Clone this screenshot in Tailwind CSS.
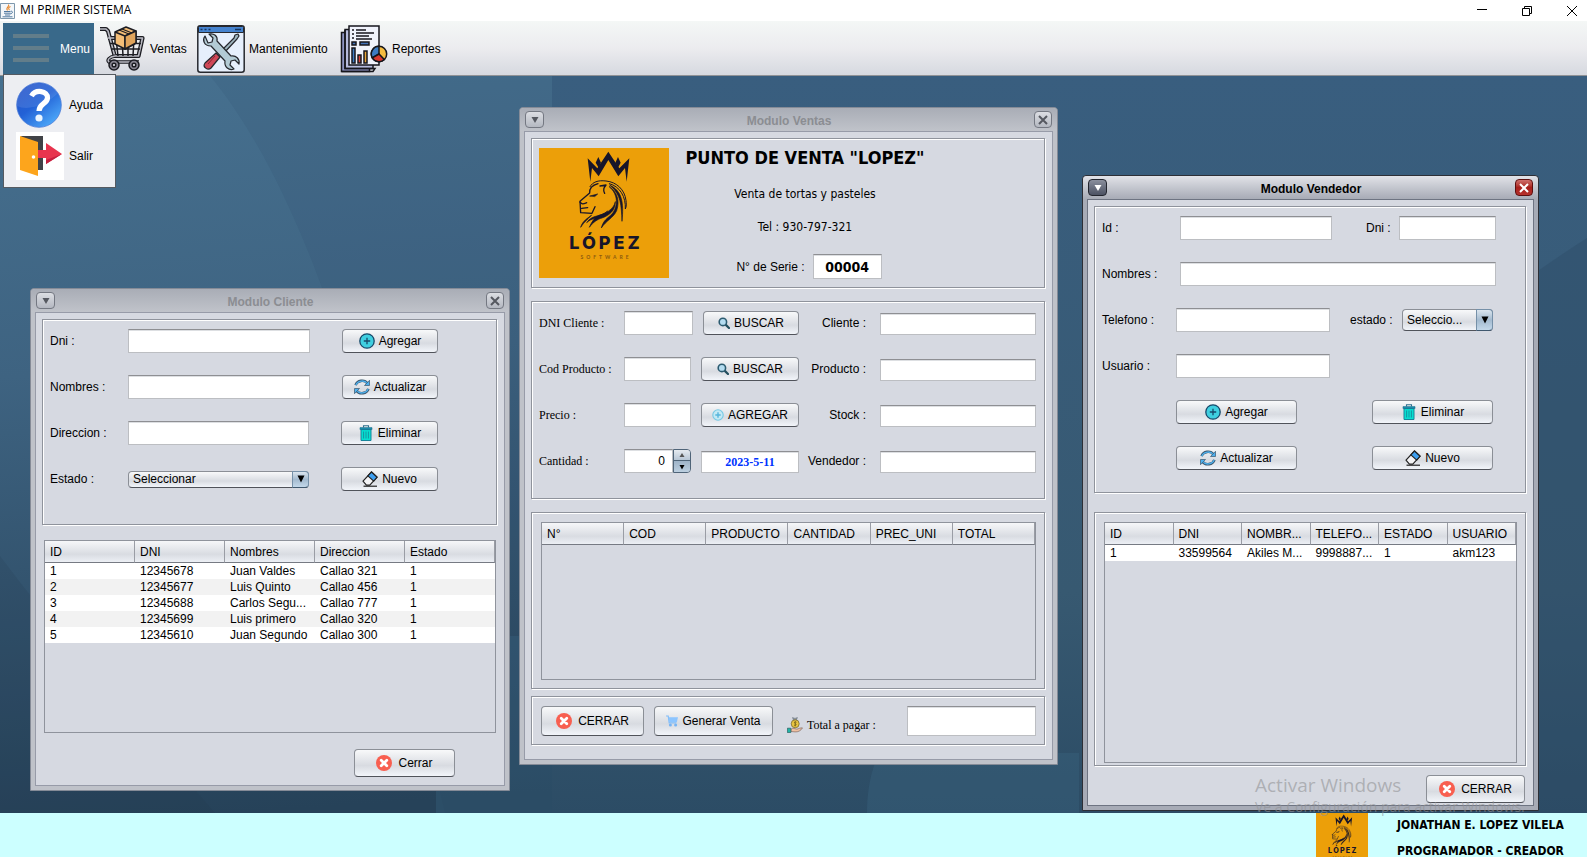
<!DOCTYPE html>
<html lang="es">
<head>
<meta charset="utf-8">
<title>MI PRIMER SISTEMA</title>
<script src="https://cdn.jsdelivr.net/npm/@tailwindcss/browser@4"></script>
</head>
<body class="flex min-h-screen flex-col overflow-hidden bg-white font-['Liberation_Sans',Arial,sans-serif] text-xs text-black">

<svg class="hidden" aria-hidden="true">
  <symbol id="i-plus" viewBox="0 0 16 16"><circle cx="8" cy="8" r="7.2" fill="#3fcfe0" stroke="#174a6b" stroke-width="1.3"/><path d="M8 4.8v6.4M4.8 8h6.4" stroke="#174a6b" stroke-width="1.3"/></symbol>
  <symbol id="i-sync" viewBox="0 0 16 16"><g fill="none"><path d="M1.6 6.2C3.2 1.2 10.5.2 13.6 4.6M14.4 9.8C12.8 14.8 5.5 15.8 2.4 11.4" stroke="#3c566b" stroke-width="2.6"/><path d="M1.8 6.2C3.4 1.5 10.5.5 13.4 4.6M14.2 9.8C12.6 14.5 5.5 15.5 2.6 11.4" stroke="#4db0ee" stroke-width="1.3"/></g><path d="M15.5 1.3v5.2h-5zM.5 14.7V9.5h5z" fill="#4db0ee" stroke="#3c566b" stroke-width=".7"/></symbol>
  <symbol id="i-trash" viewBox="0 0 16 16"><path d="M5.5 2.5V.8h5v1.7" fill="none" stroke="#2c6f8d" stroke-width="1.1"/><path d="M3 4.5h10v11H3z" fill="#06dfd0" stroke="#16859b"/><path d="M2 2.6h12v2H2z" fill="#1a8dab" stroke="#1a6c8b" stroke-width=".6"/><path d="M5.6 6.5v7M8 6.5v7M10.4 6.5v7" stroke="#1496a3"/></symbol>
  <symbol id="i-erase" viewBox="0 0 16 16"><path d="M1 10.2 9.5 1l5.6 5.2-7.3 7.9H4.4z" fill="#f4f4f6" stroke="#222" stroke-width="1.2" stroke-linejoin="round"/><path d="m5.9 4.9 5.8 5.2 3.4-3.9L9.5 1z" fill="#3d9ff0" stroke="#222" stroke-width="1.2" stroke-linejoin="round"/><path d="M1.5 15.2h13.5" stroke="#222" stroke-width="1.2"/></symbol>
  <symbol id="i-close" viewBox="0 0 16 16"><circle cx="8" cy="8" r="8" fill="#f85f50"/><path d="m5.2 5.2 5.6 5.6m0-5.6-5.6 5.6" stroke="#fff" stroke-width="2.8" stroke-linecap="round"/></symbol>
  <symbol id="i-search" viewBox="0 0 12 12"><path d="m7.6 7.6 3.4 3.4" stroke="#234e5e" stroke-width="2.2" stroke-linecap="round"/><circle cx="4.9" cy="4.9" r="3.7" fill="#b4dcf0" stroke="#2c5b70" stroke-width="1.6"/></symbol>
  <symbol id="i-plus2" viewBox="0 0 12 12"><circle cx="6" cy="6" r="5.2" fill="#c4e9f4" stroke="#76c9e4" stroke-width="1.1"/><path d="M6 3.3v5.4M3.3 6h5.4" stroke="#55b5dc" stroke-width="1.4"/></symbol>
  <symbol id="i-cart" viewBox="0 0 12 12"><path d="M0 1h2.2l1 6.8h7.2" fill="none" stroke="#82bdf8" stroke-width="1.2"/><path d="M2.5 2.2H12l-1.2 5H3.2z" fill="#8cc5ff"/><circle cx="4.4" cy="10" r="1.5" fill="#76b4f4"/><circle cx="9.6" cy="10" r="1.5" fill="#76b4f4"/></symbol>
  <symbol id="i-money" viewBox="0 0 16 16"><path d="m6.5 3-1-2.4L8 1.4l2.4-.8L9.4 3z" fill="#9aa3ad" stroke="#555f6b" stroke-width=".5"/><circle cx="8.2" cy="6.8" r="4" fill="#e8c53e" stroke="#7a6a35" stroke-width=".8"/><path d="M9.5 5.3c-1.4-1-3 .3-1.3 1.3 2 .8.6 2.4-1.2 1.5M8.2 4.2v5.2" fill="none" stroke="#635218" stroke-width=".7"/><path d="M4 12.2c2-1.6 3.5-.4 6 0 1.6-.5 3.3-1.6 5.5-1.3-1.8 3-4.5 4.2-7.5 4L4 14.5z" fill="#efc1a3" stroke="#6f5a55" stroke-width=".6"/><path d="M.4 11.2h3.4v4.4H.4z" fill="#21b5a8" stroke="#2b5f60" stroke-width=".7"/></symbol>
  <symbol id="logo" viewBox="0 0 130 130">
    <path d="M0 0h130v130H0z" fill="#ec9f09"/>
    <g transform="scale(.3333) translate(-27 -24)" fill="none" stroke="#17152a" stroke-linejoin="round" stroke-linecap="round">
      <path d="m173 55 29 30 33-50 33 50 30-30-8 70-5-41-20 25-30-49-29 49-20-25-5 41z" fill="#17152a" stroke="none"/>
      <path d="m205 51 8 17-7 15-9-15zM264 51l8 17-8 15-8-15z" fill="#17152a" stroke="none"/>
      <path d="M180 140c8-14 24-20 48-17 32 3 56 26 60 58 1 10 2 18-2 26 2-36-16-68-48-76" stroke-width="3"/>
      <path d="M240 136c36 16 42 52 36 108-2-50-4-80-32-104z" fill="#17152a" stroke-width="2"/>
      <path d="M238 140c28 24 26 60 8 82-12 12-26 18-32 42 16-24 36-30 46-52 10-30 2-56-22-72z" fill="#17152a" stroke-width="2"/>
      <path d="M256 186c-6 24-30 34-48 40-14 6-22 18-30 36 12-16 24-24 38-28 22-8 40-22 40-48z" fill="#17152a" stroke-width="2"/>
      <path d="M232 214c-20 18-44 8-62 34 14-14 32-12 46-20zM184 226c-12 10-26 16-32 36 10-16 20-22 32-36z" fill="#17152a" stroke-width="2"/>
      <path d="M204 131c-18 5-26 16-25 28l-29 25 2 34 34 2 9-20" stroke-width="4"/>
      <path d="M150 186c6 8 10 6 20 2M155 205l18-2M210 138l18-3c-6 8-10 14-4 25" stroke-width="4"/>
      <path d="m180 168 23-6-8 7z" fill="#17152a" stroke-width="2"/>
    </g>
    <text x="67" y="101" text-anchor="middle" fill="#17152a" class="font-['Inter','Open_Sans',sans-serif] text-[18px] font-extrabold tracking-[3px]">LÓPEZ</text>
    <text x="67" y="111" text-anchor="middle" fill="#8b5a10" class="font-['Lato','Open_Sans',sans-serif] text-[5px] font-bold tracking-[3px]">SOFTWARE</text>
  </symbol>
</svg>

<!-- Application title bar -->
<header class="flex h-[21px] items-center bg-white">
  <svg class="h-4 w-4" viewBox="0 0 16 16"><path d="M.5.5h14v15H.5z" fill="#f4f7fa" stroke="#7e98ad"/><path d="M8.5 1.5c1.5 2-3.5 3-1 6M10.5 3.5c-2 .8-2.5 2-1 3.5" fill="none" stroke="#e8872c" stroke-width="1.1"/><path d="M4 8.5h6.5M4 10.2h6.5M5 12h5M2.5 13.8h10" stroke="#5079a0"/><path d="M10.8 8.2c2.5-.3 2 2.4-.6 2.8" fill="none" stroke="#5079a0"/></svg>
  <h1 class="ml-1 pb-0.5 font-['Open_Sans',sans-serif] text-xs leading-4">MI PRIMER SISTEMA</h1>
  <div class="ml-auto flex gap-[33px] pr-[9px]">
    <button aria-label="Minimizar"><svg class="h-3 w-3" viewBox="0 0 12 12"><path d="M1 4.5h10" stroke="#000"/></svg></button>
    <button aria-label="Restaurar"><svg class="h-3 w-3" viewBox="0 0 12 12" fill="none" stroke="#000"><path d="M1.500 3.500h7v7h-7zM3.500 3.500v-2h7v7h-2"/></svg></button>
    <button aria-label="Cerrar aplicación"><svg class="h-3 w-3" viewBox="0 0 12 12"><path d="m1 1 10 10M11 1 1 11" stroke="#000"/></svg></button>
  </div>
</header>

<!-- Menu bar -->
<nav class="relative z-10 flex h-[55px] border-b border-[#909296] bg-linear-to-b from-[#f4f7f6] via-[#ececef] to-[#d6d9e0] pt-0.5 pl-[3px]">
  <button class="flex w-[91px] items-center gap-1 bg-[#39698a] pl-[5px] text-white">
    <svg class="h-12 w-12" viewBox="0 0 48 48"><path d="M5 11h36M5 23h36M5 35h36" stroke="#627d8a" stroke-width="4"/></svg>Menu</button>
  <button class="flex w-[98px] items-center gap-1 pl-1">
    <svg class="h-12 w-12" viewBox="0 0 48 48" fill="none" stroke="#1c1c22" stroke-width="1.500" stroke-linejoin="round">
      <path d="M2 4h6l2 2 7 26M10 13h34.500l-4 18H16" stroke-width="4.200"/>
      <path d="M2 4h6l2 2 7 26M10 13h34.500l-4 18H16" stroke="#b9b9c2" stroke-width="1.600"/>
      <path d="M12 18.500h31M14 24h28M18 13l2 18M24 13l1 18M30 13v18M36 13l-1 18"/>
      <path d="M17 31c-6 1-8 4-6 6h30" stroke-width="3.600"/><path d="M17 31c-6 1-8 4-6 6h30" stroke="#b9b9c2"/>
      <circle cx="16" cy="40" r="5" fill="#86838f"/><circle cx="36" cy="40" r="5" fill="#86838f"/><circle cx="16" cy="40" r="1.800" fill="#e8e8ee"/><circle cx="36" cy="40" r="1.800" fill="#e8e8ee"/>
      <path d="m17 7 11-5 10 4v12l-11 6-10-5z" fill="#f3bd77"/><path d="m17 7 10 4 11-5M27 11v13" /><path d="m21 5 10 4v5M24 4l10 4" stroke-width="1.200"/><path d="m27 11 11-5v12l-11 6z" fill="#e0a45c"/>
    </svg>Ventas</button>
  <button class="flex w-[143px] items-center gap-1 pl-[5px]">
    <svg class="h-12 w-12" viewBox="0 0 48 48" stroke="#26282e" stroke-linejoin="round">
      <rect x=".8" y=".8" width="46.400" height="46.400" rx="2.500" fill="#e6effc" stroke-width="1.500"/><path d="M1.500 7.500v-5l1-1h43l1 1v5z" fill="#4583cf"/><path d="M3.500 4.500h2M7.500 4.500h2M11.500 4.500h2M38 4.500h6" stroke="#17355e" stroke-width="1.600"/>
      <path d="m24 26 13-13 1-3 3-1 1 2-2 3-13 14z" fill="#9fb6c0" stroke-width="1.200"/>
      <path d="m19 28 4 4-9 11c-3 3-9-1-6-5z" fill="#cf4858" stroke-width="1.200"/><path d="m11 39 7-8" stroke="#8e2433"/>
      <path d="M8 11c-3 4-1 10 6 10l14 15c-1 6 4 10 9 8l-4-4 1-4 4-1 4 4c1-5-3-9-8-8L20 16c1-5-3-8-8-7l4 4-1 4-4 1z" fill="#b3cbd5" stroke-width="1.200"/>
    </svg>Mantenimiento</button>
  <button class="flex items-center gap-1 pl-[5px]">
    <svg class="h-12 w-12" viewBox="0 0 48 48" stroke="#16161c" stroke-width="1.500">
      <path d="M1.500 7.500h28v39h-28z" fill="#8f96c4"/><path d="M5 4.500h28v39H5z" fill="#b6bbdc"/><path d="M1.500 46.500H33l2-3H5V5" fill="none"/><path d="M9 1h30v39H9z" fill="#f0f3fc"/>
      <path d="M12 5h2M12 9h2M12 13h2M16 5h10M16 8h18M16 11h13M16 14h16" stroke-width="1.300"/>
      <path d="M12 17h4v3h-4zM20 17h9v3h-9z" fill="#4272b8"/><path d="M12 23h3v15h-3z" fill="#3e7cc4"/><path d="M18 30h3v8h-3z" fill="#d83f35"/><path d="M24 26h3v12h-3z" fill="#e8a637"/>
      <circle cx="39" cy="29" r="7.700" fill="#f5bc3f"/><path d="M39 29v-7.700a7.700 7.700 0 0 0-6.700 11.500z" fill="#3e7cc4"/><path d="m39 29-6.700 3.800a7.700 7.700 0 0 0 12 1.700z" fill="#d8382f"/>
    </svg>Reportes</button>
  <div class="absolute top-[53px] left-[3px] w-[113px] border border-[#555a61] bg-[#edeef2] pt-1 pb-1.5">
    <button class="flex h-[51px] w-full items-center gap-[5px] pl-3">
      <svg class="h-12 w-12" viewBox="0 0 48 48"><defs><linearGradient id="hg" x1="0" y1="0" x2=".8" y2="1"><stop offset="0" stop-color="#2a55c8"/><stop offset=".5" stop-color="#2261d6"/><stop offset="1" stop-color="#50aefc"/></linearGradient></defs><circle cx="23" cy="24" r="22.300" fill="url(#hg)" stroke="#4b7bd8" stroke-width=".8"/><path d="M1 25C13 31 33 22 42 12 32-3 2-1 1 25z" fill="#fff" opacity=".1"/><path d="M15.500 15c4-7 16.500-5.500 16 2-.4 6-8.500 5.500-8.500 13" fill="none" stroke="#fff" stroke-width="5.200"/><circle cx="23" cy="37" r="3.600" fill="#e9f4ff"/></svg>Ayuda</button>
    <button class="flex h-[51px] w-full items-center gap-[5px] pl-3">
      <svg class="h-12 w-12" viewBox="0 0 48 48"><path d="M0 0h48v48H0z" fill="#fff"/><path d="M5 4h22v34H17z" fill="#404247"/><path d="m4 4 18 6v34L4 38z" fill="#fda51c"/><circle cx="17.500" cy="25" r="1.800" fill="#fff"/><path d="M22 18h8v-7l16 11-16 10v-6h-8z" fill="#e8344e"/><path d="m30 32 16-10-16 6z" fill="#c51f3f"/></svg>Salir</button>
  </div>
</nav>

<!-- Desktop area -->
<main class="relative flex-1 bg-[#3b5f7c] [&_button]:cursor-default [&_input]:border [&_input]:border-[#bcbec2] [&_input]:border-t-[#8e8f93] [&_input]:bg-white [&_input]:shadow-[inset_0_1px_0_#dddfe2] [&_td]:h-4 [&_td]:truncate [&_td]:pl-[5px] [&_td]:leading-4 [&_th]:h-[22px] [&_th]:border-r [&_th]:border-[#9a9da5] [&_th]:pl-[5px] [&_th]:text-left [&_th]:font-normal">
  <svg class="absolute inset-0 h-full w-full" viewBox="0 0 1587 737" preserveAspectRatio="none" aria-hidden="true">
    <defs>
      <linearGradient id="bg" x1="0" y1="0" x2=".15" y2="1"><stop offset="0" stop-color="#46708f"/><stop offset=".4" stop-color="#3e6381"/><stop offset="1" stop-color="#264259"/></linearGradient>
      <linearGradient id="bg2" x1="0" y1="0" x2="0" y2="1"><stop offset="0" stop-color="#395e7f"/><stop offset=".7" stop-color="#375971"/><stop offset="1" stop-color="#2c4c65"/></linearGradient>
    </defs>
    <path d="M0 0h1587v737H0z" fill="url(#bg)"/>
    <path d="M210 0c50 60 90 150 115 220l120 517h500V0z" fill="#0c2a40" opacity=".06"/>
    <path d="M552 0h1035v737H552z" fill="url(#bg2)"/>
    <path d="M436 560h116v177H436z" fill="#3a6480" opacity=".35"/>
    <path d="M867 737c0-20 3-40 12-60h200v60z" fill="#3a6480" opacity=".4"/>
    <path d="M0 480c60 80 140 170 215 257H0z" fill="#21394c" opacity=".15"/>
    <path d="M1587 162c-110 70-330 240-500 400v175h500z" fill="#2c4b66" opacity=".4"/>
  </svg>

  <!-- Modulo Cliente -->
  <section class="absolute top-[212px] left-[30px] w-[480px] rounded-t border border-[#858b97] bg-[#bfc2c9] px-1 pb-1">
    <div class="-mx-1 flex h-[23px] items-center justify-between rounded-t bg-linear-to-b from-[#a9adb6] to-[#c0c3ca] px-[5px] font-bold text-[#8b8d92]">
      <button aria-label="Menú de Cliente" class="flex h-[17px] w-[19px] items-center justify-center rounded border border-[#747882] bg-linear-to-b from-[#dcdee3] to-[#b4b8c1] text-[#555860]"><svg class="h-2 w-2" viewBox="0 0 8 8"><path d="M.5 1h7L4 7z" fill="currentColor"/></svg></button>
      <h2 class="pt-0.5">Modulo Cliente</h2>
      <button aria-label="Cerrar Cliente" class="flex h-[17px] w-[18px] items-center justify-center rounded border border-[#747882] bg-linear-to-b from-[#dcdee3] to-[#b4b8c1] text-[#555860]"><svg class="h-2.5 w-2.5" viewBox="0 0 10 10"><path d="m1 1 8 8M9 1 1 9" stroke="currentColor" stroke-width="2"/></svg></button>
    </div>
    <div class="border border-[#979ba8] bg-[#d6d9e1] pt-1.5 pr-[7px] pb-2 pl-1.5">
      <form class="flex flex-col gap-[22px] border border-[#8f939c] pt-[9px] pb-[33px] pl-[7px] shadow-[1px_1px_0_#fff,inset_1px_1px_0_#fff]">
        <div class="flex h-6 items-center"><label for="c-dni" class="w-[78px]">Dni :</label><input id="c-dni" class="h-6 w-[182px]">
          <button type="button" class="ml-8 flex h-6 w-24 items-center justify-center gap-1 rounded border border-[#8b8f96] border-b-[#50535a] bg-linear-to-b from-[#f8f9fa] via-[#d8dbe1] via-60% to-[#f2f5fa]"><svg class="h-4 w-4"><use href="#i-plus"/></svg>Agregar</button></div>
        <div class="flex h-6 items-center"><label for="c-nom" class="w-[78px]">Nombres :</label><input id="c-nom" class="h-6 w-[182px]">
          <button type="button" class="ml-8 flex h-6 w-24 items-center justify-center gap-1 rounded border border-[#8b8f96] border-b-[#50535a] bg-linear-to-b from-[#f8f9fa] via-[#d8dbe1] via-60% to-[#f2f5fa]"><svg class="h-4 w-4"><use href="#i-sync"/></svg>Actualizar</button></div>
        <div class="flex h-6 items-center"><label for="c-dir" class="w-[78px]">Direccion :</label><input id="c-dir" class="h-6 w-[181px]">
          <button type="button" class="ml-8 flex h-6 w-[97px] items-center justify-center gap-1 rounded border border-[#8b8f96] border-b-[#50535a] bg-linear-to-b from-[#f8f9fa] via-[#d8dbe1] via-60% to-[#f2f5fa]"><svg class="h-4 w-4"><use href="#i-trash"/></svg>Eliminar</button></div>
        <div class="flex h-6 items-center"><label for="c-est" class="w-[78px]">Estado :</label>
          <div class="relative w-[181px]"><select id="c-est" class="block h-[17px] w-full appearance-none rounded border border-[#8b8f96] border-b-[#50535a] bg-linear-to-b from-[#f8f9fa] via-[#d8dbe1] via-60% to-[#f2f5fa] pl-1 leading-[15px]"><option>Seleccionar</option></select>
            <span class="pointer-events-none absolute top-0 right-0 flex h-[17px] w-[17px] items-center justify-center rounded-r border border-[#7590a8] border-b-[#3f586e] bg-linear-to-b from-[#dbe5ee] via-[#a3bacf] to-[#c3d8ea]"><svg class="h-2 w-2" viewBox="0 0 8 8"><path d="M.5.5h7L4 7.500z"/></svg></span></div>
          <button type="button" class="ml-8 flex h-6 w-[97px] items-center justify-center gap-1 rounded border border-[#8b8f96] border-b-[#50535a] bg-linear-to-b from-[#f8f9fa] via-[#d8dbe1] via-60% to-[#f2f5fa]"><svg class="h-4 w-4"><use href="#i-erase"/></svg>Nuevo</button></div>
      </form>
      <div class="mt-[15px] mr-px ml-0.5 h-[193px] border border-[#8f939c]">
        <table class="w-full table-fixed border-separate border-spacing-0">
          <thead class="bg-linear-to-b from-[#f6f7f9] via-[#d9dce2] via-60% to-[#eff2f7] [&_th]:border-b [&_th]:border-b-[#767a83]"><tr><th>ID</th><th>DNI</th><th>Nombres</th><th>Direccion</th><th>Estado</th></tr></thead>
          <tbody>
            <tr class="bg-white"><td>1</td><td>12345678</td><td>Juan Valdes</td><td>Callao 321</td><td>1</td></tr>
            <tr class="bg-[#f2f2f2]"><td>2</td><td>12345677</td><td>Luis Quinto</td><td>Callao 456</td><td>1</td></tr>
            <tr class="bg-white"><td>3</td><td>12345688</td><td>Carlos Segu...</td><td>Callao 777</td><td>1</td></tr>
            <tr class="bg-[#f2f2f2]"><td>4</td><td>12345699</td><td>Luis primero</td><td>Callao 320</td><td>1</td></tr>
            <tr class="bg-white"><td>5</td><td>12345610</td><td>Juan Segundo</td><td>Callao 300</td><td>1</td></tr>
          </tbody>
        </table>
      </div>
      <div class="mt-4 mr-[42px] flex justify-end"><button class="flex h-7 w-[101px] items-center justify-center gap-1.5 rounded border border-[#8b8f96] border-b-[#50535a] bg-linear-to-b from-[#f8f9fa] via-[#d8dbe1] via-60% to-[#f2f5fa]"><svg class="h-4 w-4"><use href="#i-close"/></svg>Cerrar</button></div>
    </div>
  </section>

  <!-- Modulo Ventas -->
  <section class="absolute top-[31px] left-[519px] w-[539px] rounded-t border border-[#858b97] bg-[#bfc2c9] px-1 pb-1">
    <div class="-mx-1 flex h-[23px] items-center justify-between rounded-t bg-linear-to-b from-[#a9adb6] to-[#c0c3ca] px-[5px] font-bold text-[#8b8d92]">
      <button aria-label="Menú de Ventas" class="flex h-[17px] w-[19px] items-center justify-center rounded border border-[#747882] bg-linear-to-b from-[#dcdee3] to-[#b4b8c1] text-[#555860]"><svg class="h-2 w-2" viewBox="0 0 8 8"><path d="M.5 1h7L4 7z" fill="currentColor"/></svg></button>
      <h2 class="pt-0.5">Modulo Ventas</h2>
      <button aria-label="Cerrar Ventas" class="flex h-[17px] w-[18px] items-center justify-center rounded border border-[#747882] bg-linear-to-b from-[#dcdee3] to-[#b4b8c1] text-[#555860]"><svg class="h-2.5 w-2.5" viewBox="0 0 10 10"><path d="m1 1 8 8M9 1 1 9" stroke="currentColor" stroke-width="2"/></svg></button>
    </div>
    <div class="border border-[#979ba8] bg-[#d6d9e1] pt-1.5 pr-[7px] pb-3.5 pl-1.5">
      <div class="flex border border-[#8f939c] pt-[9px] pb-2 pl-[7px] shadow-[1px_1px_0_#fff,inset_1px_1px_0_#fff]">
        <svg class="h-[130px] w-[130px]" role="img" aria-label="López Software"><use href="#logo"/></svg>
        <div class="flex w-[272px] flex-col items-center font-['DejaVu_Sans_Condensed','Noto_Sans',sans-serif]">
          <h3 class="text-lg leading-5 font-bold whitespace-nowrap">PUNTO DE VENTA "LOPEZ"</h3>
          <p class="mt-[18px] leading-4">Venta de tortas y pasteles</p>
          <p class="mt-[17px] leading-4">Tel : 930-797-321</p>
          <div class="mt-[19px] flex items-center gap-2 pl-2"><label for="v-serie" class="font-['Liberation_Sans',Arial,sans-serif]">N° de Serie :</label><input id="v-serie" value="00004" class="h-[25px] w-[69px] text-center text-sm font-bold"></div>
        </div>
      </div>
      <form class="mt-[13px] flex flex-col gap-[22px] border border-[#8f939c] pt-[9px] pr-2 pb-[25px] pl-[7px] shadow-[1px_1px_0_#fff,inset_1px_1px_0_#fff]">
        <div class="flex h-6 items-center"><label for="v-dni" class="w-[85px] font-['Liberation_Serif',serif]">DNI Cliente :</label><input id="v-dni" class="h-6 w-[69px]">
          <button type="button" class="ml-2.5 flex h-6 w-24 items-center justify-center gap-1 rounded border border-[#8b8f96] border-b-[#50535a] bg-linear-to-b from-[#f8f9fa] via-[#d8dbe1] via-60% to-[#f2f5fa]"><svg class="h-3 w-3"><use href="#i-search"/></svg>BUSCAR</button>
          <label for="v-cli" class="w-[67px] text-right">Cliente :</label><input id="v-cli" class="ml-3.5 h-[22px] min-w-0 flex-1 self-end"></div>
        <div class="flex h-6 items-center"><label for="v-cod" class="w-[85px] font-['Liberation_Serif',serif]">Cod Producto :</label><input id="v-cod" class="h-6 w-[67px]">
          <button type="button" class="ml-2.5 flex h-6 w-[98px] items-center justify-center gap-1 rounded border border-[#8b8f96] border-b-[#50535a] bg-linear-to-b from-[#f8f9fa] via-[#d8dbe1] via-60% to-[#f2f5fa]"><svg class="h-3 w-3"><use href="#i-search"/></svg>BUSCAR</button>
          <label for="v-pro" class="w-[67px] text-right">Producto :</label><input id="v-pro" class="ml-3.5 h-[22px] min-w-0 flex-1 self-end"></div>
        <div class="flex h-6 items-center"><label for="v-pre" class="w-[85px] font-['Liberation_Serif',serif]">Precio :</label><input id="v-pre" class="h-6 w-[67px]">
          <button type="button" class="ml-2.5 flex h-6 w-[98px] items-center justify-center gap-1 rounded border border-[#8b8f96] border-b-[#50535a] bg-linear-to-b from-[#f8f9fa] via-[#d8dbe1] via-60% to-[#f2f5fa]"><svg class="h-3 w-3"><use href="#i-plus2"/></svg>AGREGAR</button>
          <label for="v-sto" class="w-[67px] text-right">Stock :</label><input id="v-sto" class="ml-3.5 h-[22px] min-w-0 flex-1 self-end"></div>
        <div class="flex h-6 items-center"><label for="v-can" class="w-[85px] font-['Liberation_Serif',serif]">Cantidad :</label>
          <div class="flex w-[67px]"><input id="v-can" value="0" class="h-6 w-[49px] pr-[7px] text-right">
            <div class="flex w-[18px] flex-col overflow-hidden rounded-r border border-[#4f6478]">
              <button type="button" aria-label="Subir cantidad" class="flex h-[11px] items-center justify-center border-b border-[#4f6478] bg-linear-to-b from-[#e6ebf0] to-[#b7c6d5]"><svg class="h-1.5 w-1.5" viewBox="0 0 6 6"><path d="M3 1 5.500 5h-5z" fill="#555"/></svg></button>
              <button type="button" aria-label="Bajar cantidad" class="flex h-[11px] items-center justify-center bg-linear-to-b from-[#9fb4c8] to-[#bccfe0]"><svg class="h-1.5 w-1.5" viewBox="0 0 6 6"><path d="M3 5.500 5.500 1h-5z"/></svg></button>
            </div></div>
          <input aria-label="Fecha" value="2023-5-11" class="ml-2.5 h-[22px] w-[98px] self-end text-center font-['Liberation_Serif',serif] font-bold text-[#0033ff]">
          <label for="v-ven" class="w-[67px] text-right">Vendedor :</label><input id="v-ven" class="ml-3.5 h-[22px] min-w-0 flex-1 self-end"></div>
      </form>
      <div class="mt-[13px] border border-[#8f939c] pt-[9px] pr-2 pb-2 pl-[9px] shadow-[1px_1px_0_#fff,inset_1px_1px_0_#fff]">
        <div class="h-[158px] border border-[#8f939c]">
          <table class="w-full table-fixed border-separate border-spacing-0">
            <thead class="bg-linear-to-b from-[#f6f7f9] via-[#d9dce2] via-60% to-[#eff2f7] [&_th]:border-b [&_th]:border-b-[#767a83]"><tr><th>N°</th><th>COD</th><th>PRODUCTO</th><th>CANTIDAD</th><th>PREC_UNI</th><th>TOTAL</th></tr></thead>
          </table>
        </div>
      </div>
      <div class="mt-[7px] flex border border-[#8f939c] pt-[9px] pr-2 pb-2 pl-[9px] shadow-[1px_1px_0_#fff,inset_1px_1px_0_#fff]">
        <button class="flex h-[30px] w-[103px] items-center justify-center gap-1.5 rounded border border-[#8b8f96] border-b-[#50535a] bg-linear-to-b from-[#f8f9fa] via-[#d8dbe1] via-60% to-[#f2f5fa]"><svg class="h-4 w-4"><use href="#i-close"/></svg>CERRAR</button>
        <button class="ml-2.5 flex h-[30px] w-[119px] items-center justify-center gap-1 rounded border border-[#8b8f96] border-b-[#50535a] bg-linear-to-b from-[#f8f9fa] via-[#d8dbe1] via-60% to-[#f2f5fa]"><svg class="h-3 w-3"><use href="#i-cart"/></svg>Generar Venta</button>
        <label for="v-tot" class="ml-3.5 flex items-center gap-1 pt-2 font-['Liberation_Serif',serif]"><svg class="h-4 w-4"><use href="#i-money"/></svg>Total a pagar :</label>
        <input id="v-tot" class="ml-auto h-[30px] w-[129px]">
      </div>
    </div>
  </section>

  <!-- Modulo Vendedor -->
  <section class="absolute top-[99px] left-[1082px] w-[457px] rounded-t border border-[#2d2f36] bg-[#a7abb6] px-1 pb-1">
    <div class="-mx-1 flex h-[23px] items-center justify-between rounded-t bg-linear-to-b from-[#e2e3e8] to-[#a7abb6] px-[5px] font-bold">
      <button aria-label="Menú de Vendedor" class="flex h-[17px] w-[19px] items-center justify-center rounded border border-[#22252e] bg-linear-to-b from-[#8a8f9d] to-[#4c5263] text-white"><svg class="h-2 w-2" viewBox="0 0 8 8"><path d="M.5 1h7L4 7z" fill="currentColor"/></svg></button>
      <h2 class="pt-0.5">Modulo Vendedor</h2>
      <button aria-label="Cerrar Vendedor" class="flex h-[17px] w-[18px] items-center justify-center rounded border border-[#5c0f0f] bg-linear-to-b from-[#cf6f6c] via-[#a81f1b] to-[#b5302b] text-white"><svg class="h-2.5 w-2.5" viewBox="0 0 10 10"><path d="m1 1 8 8M9 1 1 9" stroke="currentColor" stroke-width="2"/></svg></button>
    </div>
    <div class="border border-[#6e7482] bg-[#d6d9e1] pt-1.5 pr-[7px] pb-0.5 pl-1.5">
      <form class="flex flex-col gap-[22px] border border-[#8f939c] pt-[9px] pb-[22px] pl-[7px] shadow-[1px_1px_0_#fff,inset_1px_1px_0_#fff]">
        <div class="flex h-6 items-center"><label for="s-id" class="w-[78px]">Id :</label><input id="s-id" class="h-6 w-[152px]"><label for="s-dni" class="ml-[34px] w-[33px]">Dni :</label><input id="s-dni" class="h-6 w-[97px]"></div>
        <div class="flex h-6 items-center"><label for="s-nom" class="w-[78px]">Nombres :</label><input id="s-nom" class="h-6 w-[316px]"></div>
        <div class="flex h-6 items-center"><label for="s-tel" class="w-[74px]">Telefono :</label><input id="s-tel" class="h-6 w-[154px]"><label for="s-est" class="ml-5 w-[52px]">estado :</label>
          <div class="relative w-[91px]"><select id="s-est" class="block h-[22px] w-full appearance-none rounded border border-[#8b8f96] border-b-[#50535a] bg-linear-to-b from-[#f8f9fa] via-[#d8dbe1] via-60% to-[#f2f5fa] pl-1 leading-5"><option>Seleccio...</option></select>
            <span class="pointer-events-none absolute top-0 right-0 flex h-[22px] w-[17px] items-center justify-center rounded-r border border-[#7590a8] border-b-[#3f586e] bg-linear-to-b from-[#dbe5ee] via-[#a3bacf] to-[#c3d8ea]"><svg class="h-2 w-2" viewBox="0 0 8 8"><path d="M.5.5h7L4 7.500z"/></svg></span></div></div>
        <div class="flex h-6 items-center"><label for="s-usu" class="w-[74px]">Usuario :</label><input id="s-usu" class="h-6 w-[154px]"></div>
        <div class="flex h-6 gap-[75px] pl-[74px]">
          <button type="button" class="flex h-6 w-[121px] items-center justify-center gap-1 rounded border border-[#8b8f96] border-b-[#50535a] bg-linear-to-b from-[#f8f9fa] via-[#d8dbe1] via-60% to-[#f2f5fa]"><svg class="h-4 w-4"><use href="#i-plus"/></svg>Agregar</button>
          <button type="button" class="flex h-6 w-[121px] items-center justify-center gap-1 rounded border border-[#8b8f96] border-b-[#50535a] bg-linear-to-b from-[#f8f9fa] via-[#d8dbe1] via-60% to-[#f2f5fa]"><svg class="h-4 w-4"><use href="#i-trash"/></svg>Eliminar</button></div>
        <div class="flex h-6 gap-[75px] pl-[74px]">
          <button type="button" class="flex h-6 w-[121px] items-center justify-center gap-1 rounded border border-[#8b8f96] border-b-[#50535a] bg-linear-to-b from-[#f8f9fa] via-[#d8dbe1] via-60% to-[#f2f5fa]"><svg class="h-4 w-4"><use href="#i-sync"/></svg>Actualizar</button>
          <button type="button" class="flex h-6 w-[121px] items-center justify-center gap-1 rounded border border-[#8b8f96] border-b-[#50535a] bg-linear-to-b from-[#f8f9fa] via-[#d8dbe1] via-60% to-[#f2f5fa]"><svg class="h-4 w-4"><use href="#i-erase"/></svg>Nuevo</button></div>
      </form>
      <div class="mt-[19px] border border-[#8f939c] pt-[9px] pr-2 pb-0.5 pl-[9px] shadow-[1px_1px_0_#fff,inset_1px_1px_0_#fff]">
        <div class="h-[241px] border border-[#8f939c]">
          <table class="w-full table-fixed border-separate border-spacing-0">
            <thead class="bg-linear-to-b from-[#f6f7f9] via-[#d9dce2] via-60% to-[#eff2f7] [&_th]:border-b [&_th]:border-b-[#767a83]"><tr><th>ID</th><th>DNI</th><th>NOMBR...</th><th>TELEFO...</th><th>ESTADO</th><th>USUARIO</th></tr></thead>
            <tbody><tr class="bg-white"><td>1</td><td>33599564</td><td>Akiles M...</td><td>9998887...</td><td>1</td><td>akm123</td></tr></tbody>
          </table>
        </div>
      </div>
      <div class="mt-[9px] mr-px flex justify-end"><button class="flex h-7 w-[99px] items-center justify-center gap-1.5 rounded border border-[#8b8f96] border-b-[#50535a] bg-linear-to-b from-[#f8f9fa] via-[#d8dbe1] via-60% to-[#f2f5fa]"><svg class="h-4 w-4"><use href="#i-close"/></svg>CERRAR</button></div>
    </div>
  </section>

  <!-- Windows activation notice -->
  <div class="pointer-events-none absolute top-[695px] left-[1255px] font-['Open_Sans',sans-serif] whitespace-nowrap text-[#929396]/60">
    <p class="text-[19px] leading-7">Activar Windows</p>
    <p class="text-sm leading-4">Ve a Configuración para activar Windows.</p>
  </div>
</main>

<footer class="flex h-11 justify-end overflow-hidden bg-[#ccffff] pr-5">
  <svg class="h-[52px] w-[52px] shrink-0" role="img" aria-label="López Software"><use href="#logo"/></svg>
  <div class="ml-[29px] min-w-[170px] font-['DejaVu_Sans_Condensed','Noto_Sans',sans-serif] text-xs font-bold whitespace-nowrap">
    <p class="pt-1 leading-4">JONATHAN E. LOPEZ VILELA</p>
    <p class="pt-3 leading-3">PROGRAMADOR - CREADOR</p>
  </div>
</footer>
</body>
</html>
